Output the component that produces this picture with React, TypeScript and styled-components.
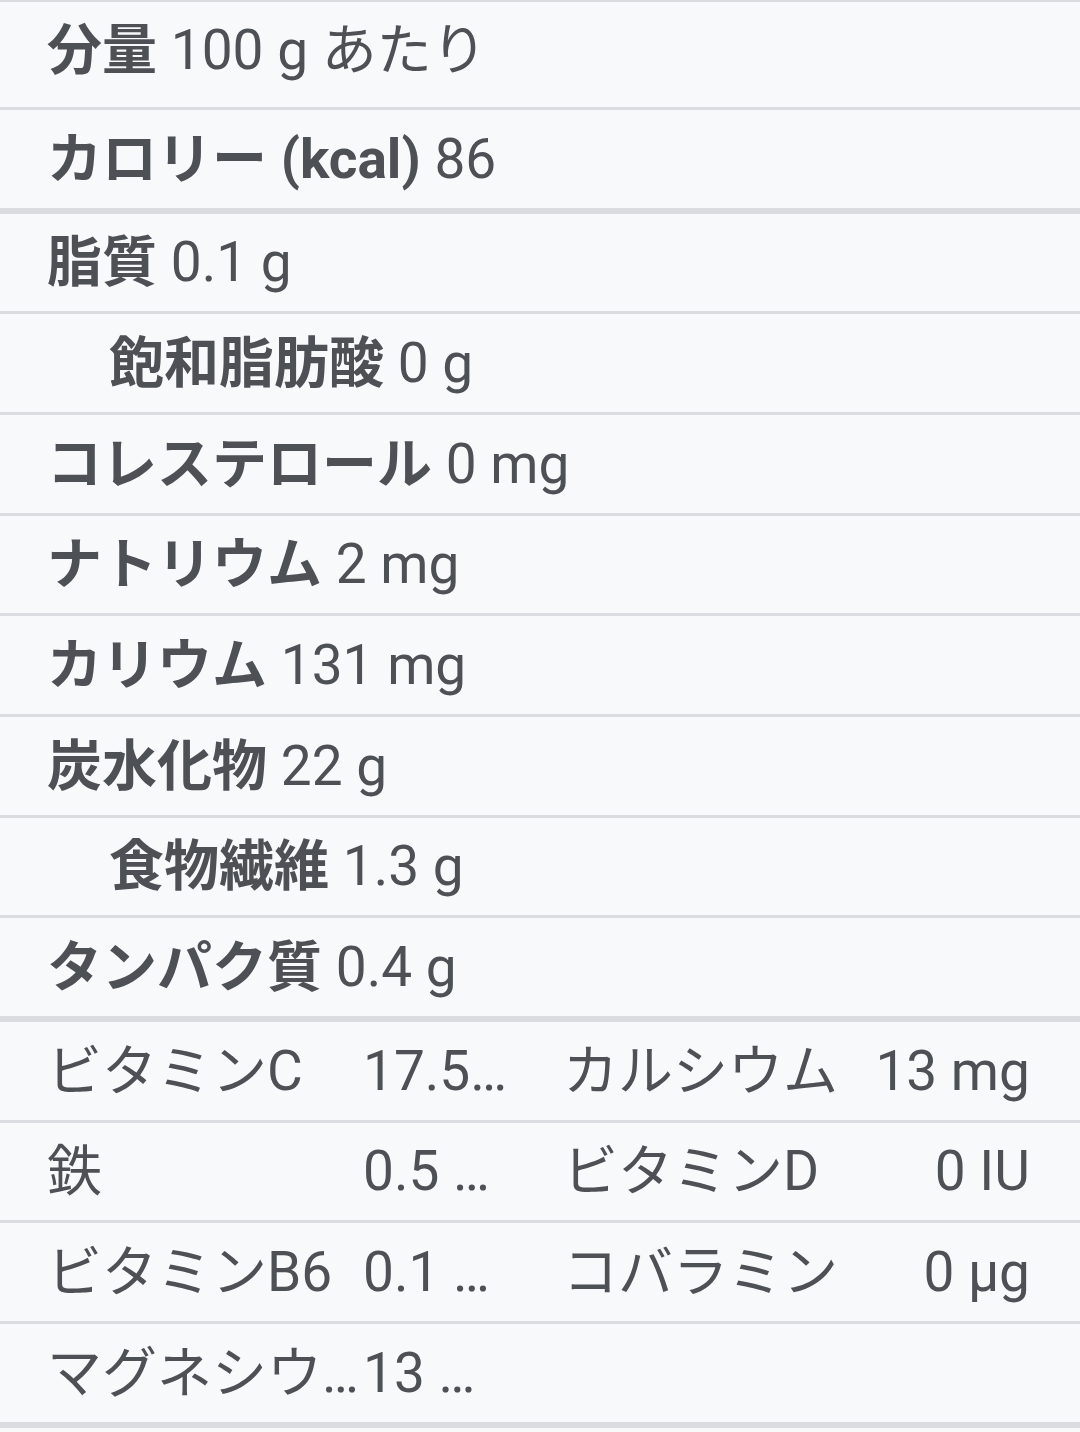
import React from 'react';
import styled, { createGlobalStyle } from 'styled-components';

interface Nutrient {
  label: string;
  value: string;
  indent?: boolean;
  thick?: boolean;
}

interface Pair {
  label: string;
  value: string;
}

const GlobalStyle = createGlobalStyle`
  html, body {
    margin: 0;
    padding: 0;
    background: #f8f9fa;
  }
  body {
    font-family: Roboto, "Noto Sans CJK JP", sans-serif;
    color: #4d5156;
  }
`;

const Panel = styled.div`
  width: 1080px;
  background: #f8f9fa;
  border-top: 2px solid #dadce0;
  font-size: 55px;
`;

const Row = styled.div<{ $thick?: boolean; $indent?: boolean; $tall?: boolean }>`
  display: flex;
  align-items: center;
  box-sizing: content-box;
  height: ${({ $tall }) => ($tall ? '96px' : '97.67px')};
  padding: ${({ $tall }) => ($tall ? '0 0 9px' : '0')};
  padding-left: ${({ $indent }) => ($indent ? '109px' : '47px')};
  border-bottom: ${({ $thick }) => ($thick ? '6px' : '3px')} solid #dadce0;
  line-height: 1.2;
  white-space: nowrap;
`;

const Label = styled.span`
  font-weight: 700;
  margin-right: 0.25em;
`;

const Amount = styled.span`
  font-weight: 400;
`;

const PairRow = styled.div<{ $thick?: boolean }>`
  display: grid;
  grid-template-columns: 316px 150px 1fr 160px;
  align-items: center;
  height: 97.67px;
  padding: 0 50px 0 47px;
  border-bottom: ${({ $thick }) => ($thick ? '6px' : '3px')} solid #dadce0;
  line-height: 1.2;
`;

const PairLabel = styled.span<{ $second?: boolean }>`
  padding-left: ${({ $second }) => ($second ? '50px' : '0')};
  white-space: nowrap;
  overflow: hidden;
  text-overflow: ellipsis;
`;

const PairValue = styled.span`
  text-align: right;
  white-space: nowrap;
  overflow: hidden;
  text-overflow: ellipsis;
`;

const main: Nutrient[] = [
  { label: 'カロリー (kcal)', value: '86', thick: true },
  { label: '脂質', value: '0.1 g' },
  { label: '飽和脂肪酸', value: '0 g', indent: true },
  { label: 'コレステロール', value: '0 mg' },
  { label: 'ナトリウム', value: '2 mg' },
  { label: 'カリウム', value: '131 mg' },
  { label: '炭水化物', value: '22 g' },
  { label: '食物繊維', value: '1.3 g', indent: true },
  { label: 'タンパク質', value: '0.4 g', thick: true },
];

const vitamins: Pair[][] = [
  [
    { label: 'ビタミンC', value: '17.5 mg' },
    { label: 'カルシウム', value: '13 mg' },
  ],
  [
    { label: '鉄', value: '0.5 mg' },
    { label: 'ビタミンD', value: '0 IU' },
  ],
  [
    { label: 'ビタミンB6', value: '0.1 mg' },
    { label: 'コバラミン', value: '0 µg' },
  ],
  [{ label: 'マグネシウム', value: '13 mg' }],
];

export default function App() {
  return (
    <>
      <GlobalStyle />
      <Panel>
        <Row $tall>
          <Label>分量</Label>
          <Amount>100 g あたり</Amount>
        </Row>

        {main.map(n => (
          <Row key={n.label} $thick={n.thick} $indent={n.indent}>
            <Label>{n.label}</Label>
            <Amount>{n.value}</Amount>
          </Row>
        ))}

        {vitamins.map((pair, i) => (
          <PairRow key={pair[0].label} $thick={i === vitamins.length - 1}>
            <PairLabel>{pair[0].label}</PairLabel>
            <PairValue>{pair[0].value}</PairValue>
            {pair[1] && (
              <>
                <PairLabel $second>{pair[1].label}</PairLabel>
                <PairValue>{pair[1].value}</PairValue>
              </>
            )}
          </PairRow>
        ))}
      </Panel>
    </>
  );
}
